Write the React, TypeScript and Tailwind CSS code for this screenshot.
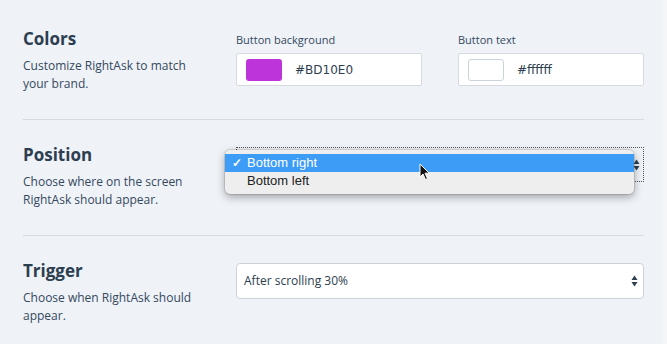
import React from "react";

const font = { fontFamily: '"Open Sans", "Noto Sans", sans-serif' };

function Arrows() {
  return (
    <svg width="7" height="12" viewBox="0 0 7 12" className="shrink-0">
      <path d="M3.5 0.5 L6.5 5 L0.5 5 Z" fill="#2c3e50" />
      <path d="M3.5 11.5 L6.5 7 L0.5 7 Z" fill="#2c3e50" />
    </svg>
  );
}

function SectionText({ title, lines }: { title: string; lines: string[] }) {
  return (
    <div className="w-[213px] shrink-0">
      <div className="text-[17px] font-bold leading-[22px] text-[#2c3e50]">{title}</div>
      <div className="mt-[7px] text-[12px] leading-[18px] text-[#34495e]">
        {lines.map((l) => (
          <div key={l}>{l}</div>
        ))}
      </div>
    </div>
  );
}

function ColorField({ label, color, value, bordered }: { label: string; color: string; value: string; bordered?: boolean }) {
  return (
    <div className="w-[186px]">
      <div className="text-[11px] leading-[14px] text-[#34495e]">{label}</div>
      <div className="mt-[6px] flex h-[33px] items-center rounded-[2px] border border-[#d5dbe1] bg-white pl-[9px]">
        <div
          className={`h-[22px] w-[36px] rounded-[3px] ${bordered ? "border border-[#c9d4dc]" : ""}`}
          style={{ backgroundColor: color }}
        />
        <span className="ml-[13px] text-[#2c3e50]" style={{ fontFamily: '"DejaVu Sans", sans-serif', fontSize: 12 }}>
          {value}
        </span>
      </div>
    </div>
  );
}

export default function App() {
  return (
    <div className="relative h-[344px] w-[667px] overflow-hidden bg-[#eff2f7]" style={font}>
      <div className="absolute right-0 top-0 h-full w-[8px] bg-gradient-to-r from-[#eef1f6] to-[#f6f7f9]" />
      <div className="w-[644px] pl-[23px]">
        {/* Colors */}
        <div className="flex h-[120px] border-b border-[#d5dbe1] pt-[28px]">
          <SectionText title="Colors" lines={["Customize RightAsk to match", "your brand."]} />
          <div className="flex gap-[36px] pt-[5px]">
            <ColorField label="Button background" color="#bd34da" value="#BD10E0" />
            <ColorField label="Button text" color="#ffffff" value="#ffffff" bordered />
          </div>
        </div>
        {/* Position */}
        <div className="relative flex h-[116px] border-b border-[#d5dbe1] pt-[24px]">
          <SectionText title="Position" lines={["Choose where on the screen", "RightAsk should appear."]} />
          <div className="flex-1 pt-[3px]">
            <div className="flex h-[35px] items-center justify-end border border-dotted border-[#555] pr-[3px]">
              <Arrows />
            </div>
          </div>
          {/* Open menu */}
          <div className="absolute left-[202px] top-[30px] w-[409px] rounded-[5px] bg-[#eeeeee] py-[4px] shadow-[0_3px_8px_rgba(0,0,0,0.35)] ring-1 ring-black/10" style={{ fontFamily: '"Liberation Sans", Arial, sans-serif' }}>
            <div className="flex h-[18px] items-center bg-[#3d9cf6] text-[13px] text-white">
              <span className="w-[22px] pl-[7px] text-[12px] font-bold">✓</span>
              <span>Bottom right</span>
            </div>
            <div className="flex h-[18px] items-center text-[13px] text-[#222]">
              <span className="w-[22px]" />
              <span>Bottom left</span>
            </div>
            <svg className="absolute left-[194px] top-[13px]" width="12" height="18" viewBox="0 0 12 18">
              <path d="M1 1 L1 14 L4 11 L6.5 16.5 L8.5 15.5 L6 10.2 L10.2 10.2 Z" fill="#111" stroke="#fff" strokeWidth="1" strokeLinejoin="round" />
            </svg>
          </div>
        </div>
        {/* Trigger */}
        <div className="flex pt-[24px]">
          <SectionText title="Trigger" lines={["Choose when RightAsk should", "appear."]} />
          <div className="flex-1 pt-[3px]">
            <div className="flex h-[36px] items-center justify-between rounded-[4px] border border-[#ccd2d9] bg-white pl-[7px] pr-[5px]">
              <span className="text-[12px] text-[#2c3e50]">After scrolling 30%</span>
              <Arrows />
            </div>
          </div>
        </div>
      </div>
    </div>
  );
}
